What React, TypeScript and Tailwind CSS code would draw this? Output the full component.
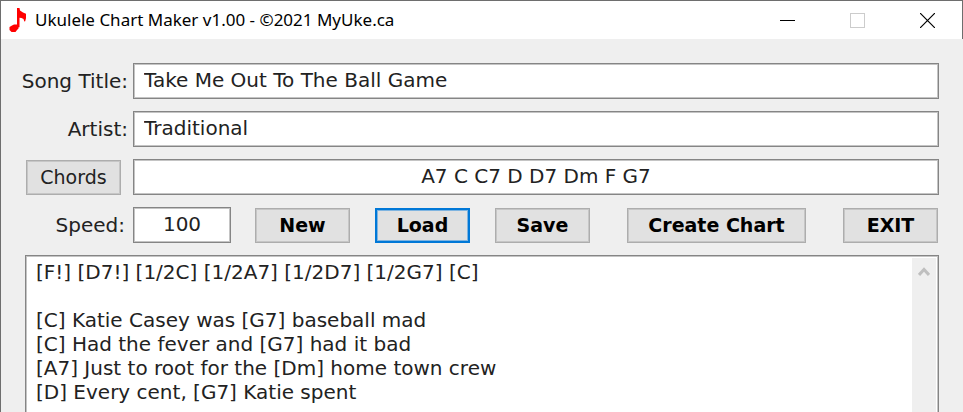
import { useState } from 'react';

const LYRICS = `[F!] [D7!] [1/2C] [1/2A7] [1/2D7] [1/2G7] [C]

[C] Katie Casey was [G7] baseball mad
[C] Had the fever and [G7] had it bad
[A7] Just to root for the [Dm] home town crew
[D] Every cent, [G7] Katie spent`;

// Shared control styles
const field =
  'h-9 min-w-0 border border-[#858585] bg-white px-[10px] pb-0.5 text-[#222] shadow-[inset_0_0_0_1px_#c4c4c4] outline-none';
const button =
  'h-[35px] border border-[#adadad] bg-[#e1e1e1] text-[19px] shadow-[inset_0_0_0_1px_#c6c6c6]';
const label = 'text-right whitespace-nowrap text-[#222]';

function TitleBar() {
  return (
    <header className="flex h-[38px] shrink-0 items-center border-r border-[#6e6e6e] bg-white pl-2">
      <svg width="18" height="26" viewBox="0 0 18 26" fill="#ff0000" aria-hidden="true">
        <path d="M8 1h2.5l.5 2.5 3 2 3 1.2v4.5l-.8 3-.9.2-.8-2.4-2-1-2-.3v9.5H8z" />
        <path d="M3 18.5l2-1h4.5v4L8 23l-1.5 2h-4L.5 23v-3z" />
      </svg>
      <h1 className="ml-2 font-['Noto_Sans','Open_Sans',sans-serif] text-[17px] whitespace-nowrap text-black">
        Ukulele Chart Maker v1.00 - ©2021 MyUke.ca
      </h1>
      <div className="ml-auto flex h-full">
        <button aria-label="Minimize" className="flex w-[70px] items-center justify-center">
          <svg width="15" height="15" stroke="#000" shapeRendering="crispEdges">
            <path d="M0 7.5h15" />
          </svg>
        </button>
        <button aria-label="Maximize" disabled className="flex w-[70px] items-center justify-center">
          <svg width="15" height="15" fill="none" stroke="#cccccc" shapeRendering="crispEdges">
            <rect x="0.5" y="0.5" width="14" height="14" />
          </svg>
        </button>
        <button aria-label="Close" className="flex w-[70px] items-center justify-center">
          <svg width="15" height="15" stroke="#000" strokeWidth="1.2">
            <path d="M0 0l15 15M15 0L0 15" />
          </svg>
        </button>
      </div>
    </header>
  );
}

export default function App() {
  const [title, setTitle] = useState('Take Me Out To The Ball Game');
  const [artist, setArtist] = useState('Traditional');
  const [chords, setChords] = useState('A7 C C7 D D7 Dm F G7');
  const [speed, setSpeed] = useState('100');
  const [lyrics, setLyrics] = useState(LYRICS);

  return (
    <div className="flex h-screen flex-col overflow-hidden border-t border-l border-[#6e6e6e] bg-[#efefef] font-['DejaVu_Sans',sans-serif] text-[20px] leading-6">
      <TitleBar />

      <main className="flex min-h-0 flex-1 flex-col gap-3 pt-6 pr-6">
        <div className="grid grid-cols-[132px_1fr] items-center gap-y-3">
          <label htmlFor="title" className={`${label} pr-[5px]`}>Song Title:</label>
          <input id="title" className={field} value={title} onChange={(e) => setTitle(e.target.value)} />

          <label htmlFor="artist" className={`${label} pr-[5px]`}>Artist:</label>
          <input id="artist" className={field} value={artist} onChange={(e) => setArtist(e.target.value)} />

          <button className={`${button} mr-3 ml-[25px] text-[#222]`}>Chords</button>
          <input
            aria-label="Chords"
            className={`${field} text-center`}
            value={chords}
            onChange={(e) => setChords(e.target.value)}
          />

          <label htmlFor="speed" className={`${label} pr-2`}>Speed:</label>
          <div className="flex items-center">
            <input
              id="speed"
              className={`${field} w-[98px] text-center`}
              value={speed}
              onChange={(e) => setSpeed(e.target.value)}
            />
            <div className="mr-px ml-6 flex flex-1 items-center font-bold text-black">
              <button className={`${button} w-[95px]`}>New</button>
              <button className="ml-[25px] h-[35px] w-[95px] border-2 border-[#0078d7] bg-[#e1e1e1] text-[19px] shadow-[inset_0_0_0_1px_#7fb4e0]">
                Load
              </button>
              <button className={`${button} ml-[25px] w-[95px]`}>Save</button>
              <button className={`${button} mx-auto w-[179px]`}>Create Chart</button>
              <button className={`${button} w-[95px]`}>EXIT</button>
            </div>
          </div>
        </div>

        {/* Lyrics editor, runs off the bottom of the window */}
        <div className="ml-6 flex min-h-0 flex-1 border border-b-0 border-[#858585] bg-white pt-[2px] pr-[2px] shadow-[inset_0_1px_0_#c4c4c4,inset_1px_0_0_#c4c4c4,inset_-1px_0_0_#c4c4c4]">
          <textarea
            aria-label="Lyrics"
            className="min-w-0 flex-1 resize-none overflow-hidden bg-transparent pt-[2px] pl-[10px] text-[#222] outline-none"
            value={lyrics}
            onChange={(e) => setLyrics(e.target.value)}
          />
          <div className="flex w-6 justify-center bg-[#efefef] pt-2">
            <svg width="12" height="11" fill="none" stroke="#bfbfbf" strokeWidth="3" aria-hidden="true">
              <path d="M1 9l5-5.5 5 5.5" />
            </svg>
          </div>
        </div>
      </main>
    </div>
  );
}
